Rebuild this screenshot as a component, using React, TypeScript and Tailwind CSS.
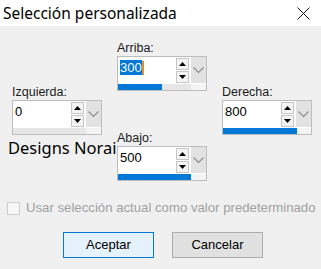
import type { ReactNode } from 'react'

type SpinFieldProps = {
  label: string
  value: ReactNode
  fill: number
}

function Arrow({ up }: { up?: boolean }) {
  return (
    <div className="flex h-[12px] w-[13px] items-center justify-center border border-[#c6c6c6] bg-[#f4f4f4]">
      <svg width="7" height="4" viewBox="0 0 7 4">
        {up ? <path d="M0 4 L3.5 0 L7 4 Z" fill="#000" /> : <path d="M0 0 L3.5 4 L7 0 Z" fill="#000" />}
      </svg>
    </div>
  )
}

function SpinField({ label, value, fill }: SpinFieldProps) {
  return (
    <div className="w-[90px]">
      <div className="h-[15px] text-[12.5px] leading-[14px] text-[#1b1b1b]">{label}</div>
      <div className="flex h-[35px] flex-col border border-[#bdbdbd] bg-white">
        <div className="flex h-[27px]">
          <div className="flex-1 pl-[2px] pt-[3px] text-[13px] leading-[15px] text-black">{value}</div>
          <div className="flex w-[14px] flex-col gap-[1px] pt-[1px]">
            <Arrow up />
            <Arrow />
          </div>
          <div className="ml-[1px] flex w-[15px] items-center justify-center bg-[#e2e2e2]">
            <svg width="11" height="7" viewBox="0 0 11 7">
              <path d="M0.5 0.5 L5.5 5.5 L10.5 0.5" stroke="#8a8a8a" strokeWidth="1.1" fill="none" />
            </svg>
          </div>
        </div>
        <div className="mt-[1px] flex h-[6px]">
          <div className="bg-[#0078d7]" style={{ width: fill }} />
          <div className="flex-1 bg-[#e6e6e6]" />
          <div className="w-[15px] bg-[#f4f4f4]" />
        </div>
      </div>
    </div>
  )
}

export default function App() {
  return (
    <div className="h-[269px] w-[321px] overflow-hidden bg-[#f0f0f0] font-['Liberation_Sans',Arial,sans-serif]">
      <div className="flex h-[26px] items-center justify-between bg-white pl-[3px] pr-[11px]">
        <span className="font-['Noto_Sans',sans-serif] text-[15.5px] leading-[20px] text-black">Selección personalizada</span>
        <svg width="13" height="13" viewBox="0 0 13 13">
          <path d="M0.5 0.5 L12.5 12.5 M12.5 0.5 L0.5 12.5" stroke="#111" strokeWidth="1" />
        </svg>
      </div>

      <div className="flex gap-[15px] pl-[12px]">
        <div className="relative z-10 w-[90px] pt-[59px]">
          <SpinField label="Izquierda:" value="0" fill={0} />
          <div className="-ml-[4px] mt-[3px] whitespace-nowrap font-['Noto_Sans',sans-serif] text-[16.5px] leading-[20px] text-black">
            Designs Norai
          </div>
        </div>
        <div className="w-[90px] pt-[15px]">
          <SpinField
            label="Arriba:"
            value={
              <span className="inline-flex items-center">
                <span className="bg-[#0078d7] text-white">300</span>
                <span className="h-[14px] w-[2px] bg-[#e8892d]" />
              </span>
            }
            fill={44}
          />
          <div className="mt-[40px]">
            <SpinField label="Abajo:" value="500" fill={74} />
          </div>
        </div>
        <div className="w-[90px] pt-[59px]">
          <SpinField label="Derecha:" value="800" fill={80} />
        </div>
      </div>

      <div className="mt-[20px] flex items-center gap-[6px] pl-[7px]">
        <div className="h-[13px] w-[13px] shrink-0 border border-[#cccccc] bg-[#f7f7f7]" />
        <span className="whitespace-nowrap text-[13.2px] leading-[14px] text-[#a0a0a0]">
          Usar selección actual como valor predeterminado
        </span>
      </div>

      <div className="mt-[17px] flex gap-[18px] pl-[63px]">
        <button type="button" className="h-[26px] w-[91px] border border-[#0078d7] bg-[#e5f1fb] text-[13px] text-black">
          Aceptar
        </button>
        <button type="button" className="h-[26px] w-[91px] border border-[#adadad] bg-[#e1e1e1] text-[13px] text-black">
          Cancelar
        </button>
      </div>
    </div>
  )
}
